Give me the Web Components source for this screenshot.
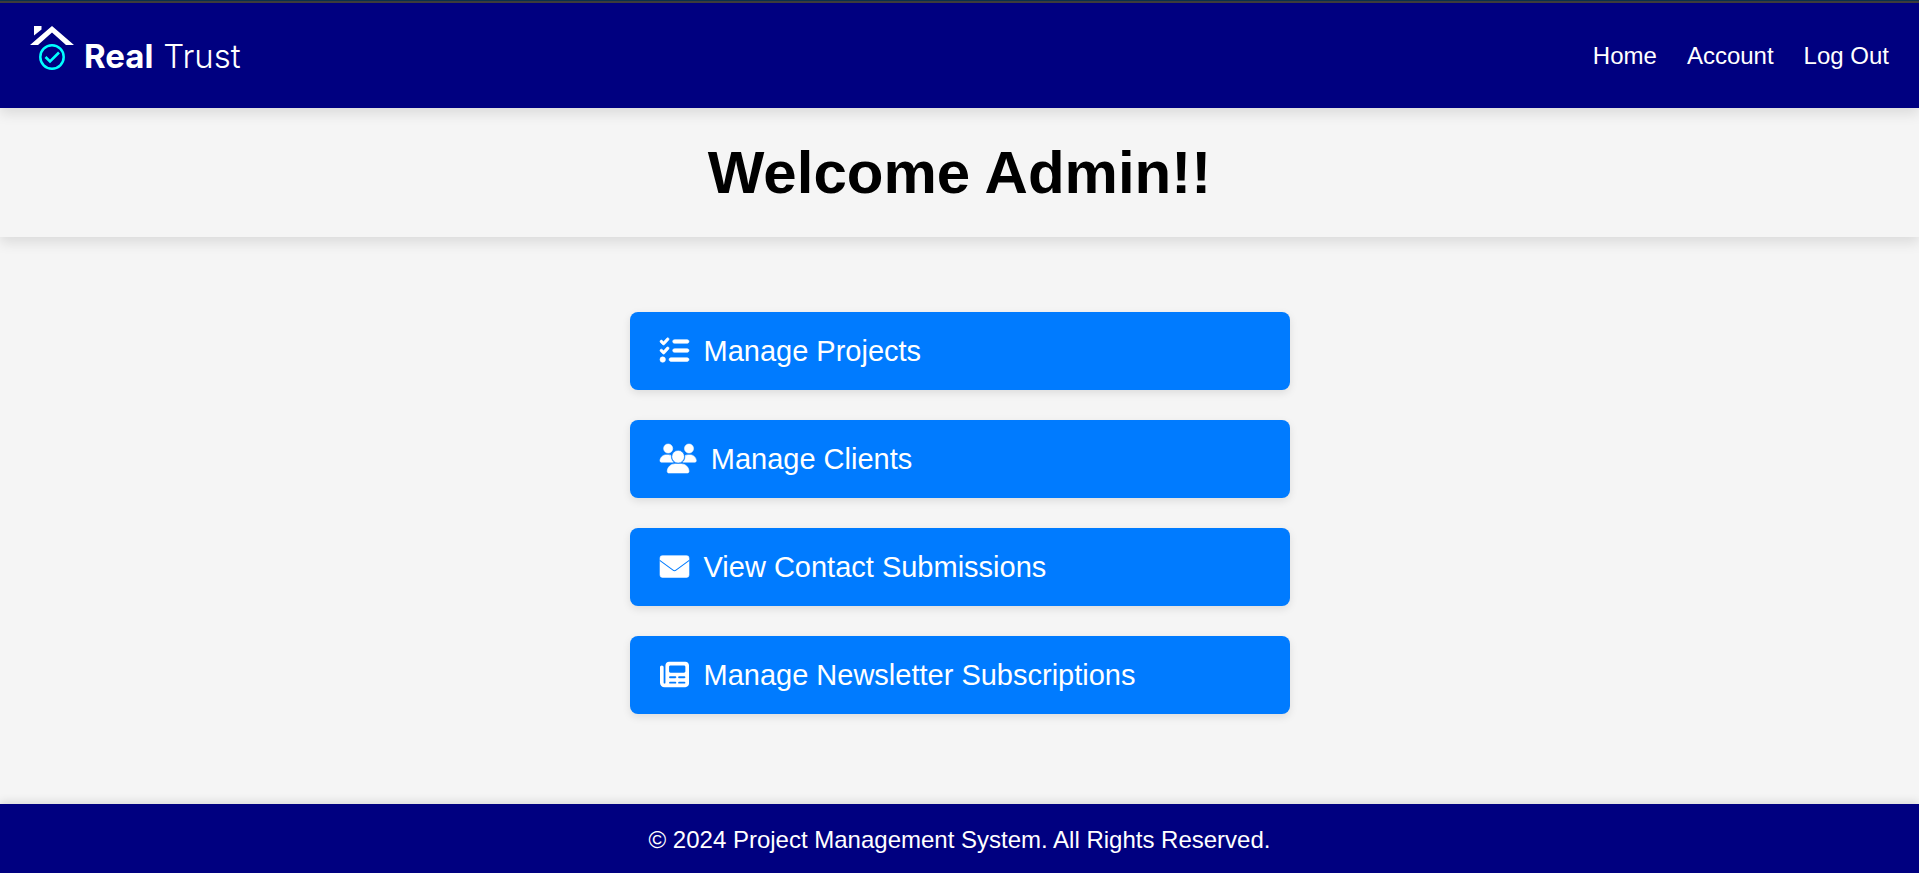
<!DOCTYPE html>
<html lang="en">
<head>
<meta charset="utf-8">
<meta name="viewport" content="width=device-width, initial-scale=1">
<title>Real Trust Admin</title>
<style>
  body {
    margin: 0;
    background: #f5f5f5;
    color: #000;
    font-family: "Liberation Sans", Arial, sans-serif;
    font-size: 24px;
    line-height: 27px;
  }
</style>
</head>
<body>
<admin-page></admin-page>

<script>
const define = (name, html) => {
  const template = document.createElement('template');
  template.innerHTML = html;
  customElements.define(name, class extends HTMLElement {
    constructor() {
      super();
      this.attachShadow({ mode: 'open' }).append(template.content.cloneNode(true));
    }
  });
};

define('brand-logo', `
  <style>
    :host { display: block; }
    a { display: flex; align-items: flex-start; color: #fff; text-decoration: none; }
    svg { display: block; width: 44px; height: 44px; }
    .name {
      display: flex; gap: 10px; margin: 13px 0 0 10px;
      font-family: Inter, sans-serif; font-size: 33px; line-height: 34px;
    }
    strong { font-weight: 700; }
    .light { font-weight: 300; }
  </style>
  <a href="#">
    <svg viewBox="0 0 44 44" aria-hidden="true">
      <path fill="#fff" d="M4 0h7.500v3.500L4 9.500zM0 19 22 0l22 19h-8L22 6.500 8 19z"/>
      <circle cx="22" cy="31" r="11.700" fill="none" stroke="#0ff" stroke-width="2.500"/>
      <path fill="none" stroke="#0ff" stroke-width="2.600" d="m15.500 31 4.500 4.500 9-9"/>
    </svg>
    <span class="name"><strong>Real</strong><span class="light">Trust</span></span>
  </a>`);

define('nav-link', `
  <style>
    :host { display: block; }
    a { color: #fff; text-decoration: none; }
  </style>
  <a href="#"><slot></slot></a>`);

define('site-header', `
  <style>
    :host {
      display: block; position: relative; background: #000080;
      box-shadow: 0 6px 12px rgba(0, 0, 0, .1);
    }
    .edge { height: 1px; background: #0b2f4c; border-bottom: 2px solid #3c3c3c; }
    header {
      display: flex; justify-content: space-between; align-items: flex-start;
      padding: 23px 30px 0; min-height: 82px;
    }
    nav { display: flex; gap: 30px; padding-top: 16px; }
  </style>
  <div class="edge"></div>
  <header>
    <brand-logo></brand-logo>
    <nav aria-label="Main"><slot></slot></nav>
  </header>`);

define('page-title', `
  <style>
    :host {
      display: block; padding: 30px; text-align: center;
      box-shadow: 0 6px 12px rgba(0, 0, 0, .1);
    }
    h1 { margin: 0; font-size: 60px; line-height: 69px; font-weight: 700; }
  </style>
  <h1><slot></slot></h1>`);

define('action-card', `
  <style>
    :host { display: block; }
    a {
      display: flex; align-items: center; gap: 15px; padding: 22px 30px;
      border-radius: 8px; background: #007bff; color: #fff;
      font-size: 29px; line-height: 34px; text-decoration: none;
      box-shadow: 0 3px 8px rgba(0, 0, 0, .1);
    }
    ::slotted(svg) {
      display: block; height: 29px; margin-bottom: 2px; overflow: visible;
      fill: #fff; stroke: #fff; stroke-width: 10px;
    }
  </style>
  <a href="#"><slot name="icon"></slot><span><slot></slot></span></a>`);

define('action-list', `
  <style>
    :host {
      display: flex; flex-direction: column; gap: 30px;
      box-sizing: border-box; width: 100%; max-width: 660px;
    }
  </style>
  <slot></slot>`);

define('site-footer', `
  <style>
    :host {
      display: block; padding: 22px 30px 20px; background: #000080; color: #fff;
      text-align: center; box-shadow: 0 -3px 8px rgba(0, 0, 0, .1);
    }
    p { margin: 0; }
  </style>
  <footer><p><slot></slot></p></footer>`);

define('admin-page', `
  <style>
    :host { display: flex; flex-direction: column; min-height: 100vh; }
    main { flex: 1; display: flex; flex-direction: column; }
    .body { display: flex; justify-content: center; padding: 75px 30px; }
  </style>
  <site-header>
    <nav-link>Home</nav-link>
    <nav-link>Account</nav-link>
    <nav-link>Log Out</nav-link>
  </site-header>
  <main>
    <page-title>Welcome Admin!!</page-title>
    <div class="body">
      <action-list>
        <action-card>
          <svg slot="icon" viewBox="0 0 512 512" aria-hidden="true"><path d="M152.100 38.200c9.900 8.900 10.700 24 1.800 33.900l-72 80c-4.400 4.900-10.600 7.800-17.200 7.900s-12.900-2.400-17.600-7L7 113C-2.300 103.600-2.300 88.400 7 79s24.600-9.400 33.900 0l22.100 22.100 55.100-61.200c8.900-9.900 24-10.700 33.900-1.800zm0 160c9.900 8.900 10.700 24 1.800 33.900l-72 80c-4.400 4.900-10.600 7.800-17.200 7.900s-12.900-2.400-17.600-7L7 273c-9.400-9.400-9.400-24.600 0-33.900s24.600-9.400 33.900 0l22.100 22.100 55.100-61.200c8.900-9.900 24-10.700 33.900-1.800zM224 96c0-17.700 14.300-32 32-32h224c17.700 0 32 14.300 32 32s-14.300 32-32 32H256c-17.700 0-32-14.300-32-32zm0 160c0-17.700 14.300-32 32-32h224c17.700 0 32 14.300 32 32s-14.300 32-32 32H256c-17.700 0-32-14.300-32-32zM160 416c0-17.700 14.300-32 32-32h288c17.700 0 32 14.300 32 32s-14.300 32-32 32H192c-17.700 0-32-14.300-32-32zM48 368a48 48 0 1 1 0 96 48 48 0 1 1 0-96z"/></svg>
          Manage Projects
        </action-card>
        <action-card>
          <svg slot="icon" viewBox="0 0 640 512" aria-hidden="true"><path d="M144 0a80 80 0 1 1 0 160 80 80 0 1 1 0-160zm368 0a80 80 0 1 1 0 160 80 80 0 1 1 0-160zM0 298.700C0 239.800 47.800 192 106.700 192h42.700c15.900 0 31 3.500 44.600 9.700-1.300 7.200-1.900 14.700-1.900 22.300 0 38.200 16.800 72.500 43.300 96H21.300C9.600 320 0 310.400 0 298.700zM405.300 320h-.7c26.600-23.500 43.300-57.800 43.300-96 0-7.600-.7-15-1.900-22.300 13.600-6.300 28.700-9.700 44.600-9.700h42.700C592.200 192 640 239.800 640 298.700c0 11.800-9.600 21.300-21.300 21.300zM128 485.300C128 411.700 187.700 352 261.300 352h117.400C452.300 352 512 411.700 512 485.300c0 14.700-11.900 26.700-26.700 26.700H154.700c-14.700 0-26.700-11.900-26.700-26.700z"/><circle cx="320" cy="224" r="112" stroke="#007bff"/></svg>
          Manage Clients
        </action-card>
        <action-card>
          <svg slot="icon" viewBox="0 0 512 512" aria-hidden="true"><rect x="0" y="64" width="512" height="384" rx="40"/><path d="M-5 148 230 320q26 20 52 0L517 148" fill="none" stroke="#007bff" stroke-width="18"/></svg>
          View Contact Submissions
        </action-card>
        <action-card>
          <svg slot="icon" viewBox="0 0 512 512" aria-hidden="true"><path d="M96 96c0-35.300 28.700-64 64-64h288c35.300 0 64 28.700 64 64v320c0 35.300-28.700 64-64 64H80c-44.200 0-80-35.800-80-80V128c0-17.700 14.300-32 32-32s32 14.300 32 32v272c0 8.800 7.200 16 16 16s16-7.200 16-16zm64 24v80c0 13.300 10.700 24 24 24h240c13.300 0 24-10.700 24-24v-80c0-13.300-10.700-24-24-24H184c-13.300 0-24 10.700-24 24zm0 184c0 8.800 7.200 16 16 16h96c8.800 0 16-7.200 16-16s-7.200-16-16-16h-96c-8.800 0-16 7.200-16 16zm160 0c0 8.800 7.200 16 16 16h96c8.800 0 16-7.200 16-16s-7.200-16-16-16h-96c-8.800 0-16 7.200-16 16zM160 400c0 8.800 7.200 16 16 16h96c8.800 0 16-7.200 16-16s-7.200-16-16-16h-96c-8.800 0-16 7.200-16 16zm160 0c0 8.800 7.200 16 16 16h96c8.800 0 16-7.200 16-16s-7.200-16-16-16h-96c-8.800 0-16 7.200-16 16z" stroke="none"/></svg>
          Manage Newsletter Subscriptions
        </action-card>
      </action-list>
    </div>
  </main>
  <site-footer>© 2024 Project Management System. All Rights Reserved.</site-footer>`);
</script>
</body>
</html>
